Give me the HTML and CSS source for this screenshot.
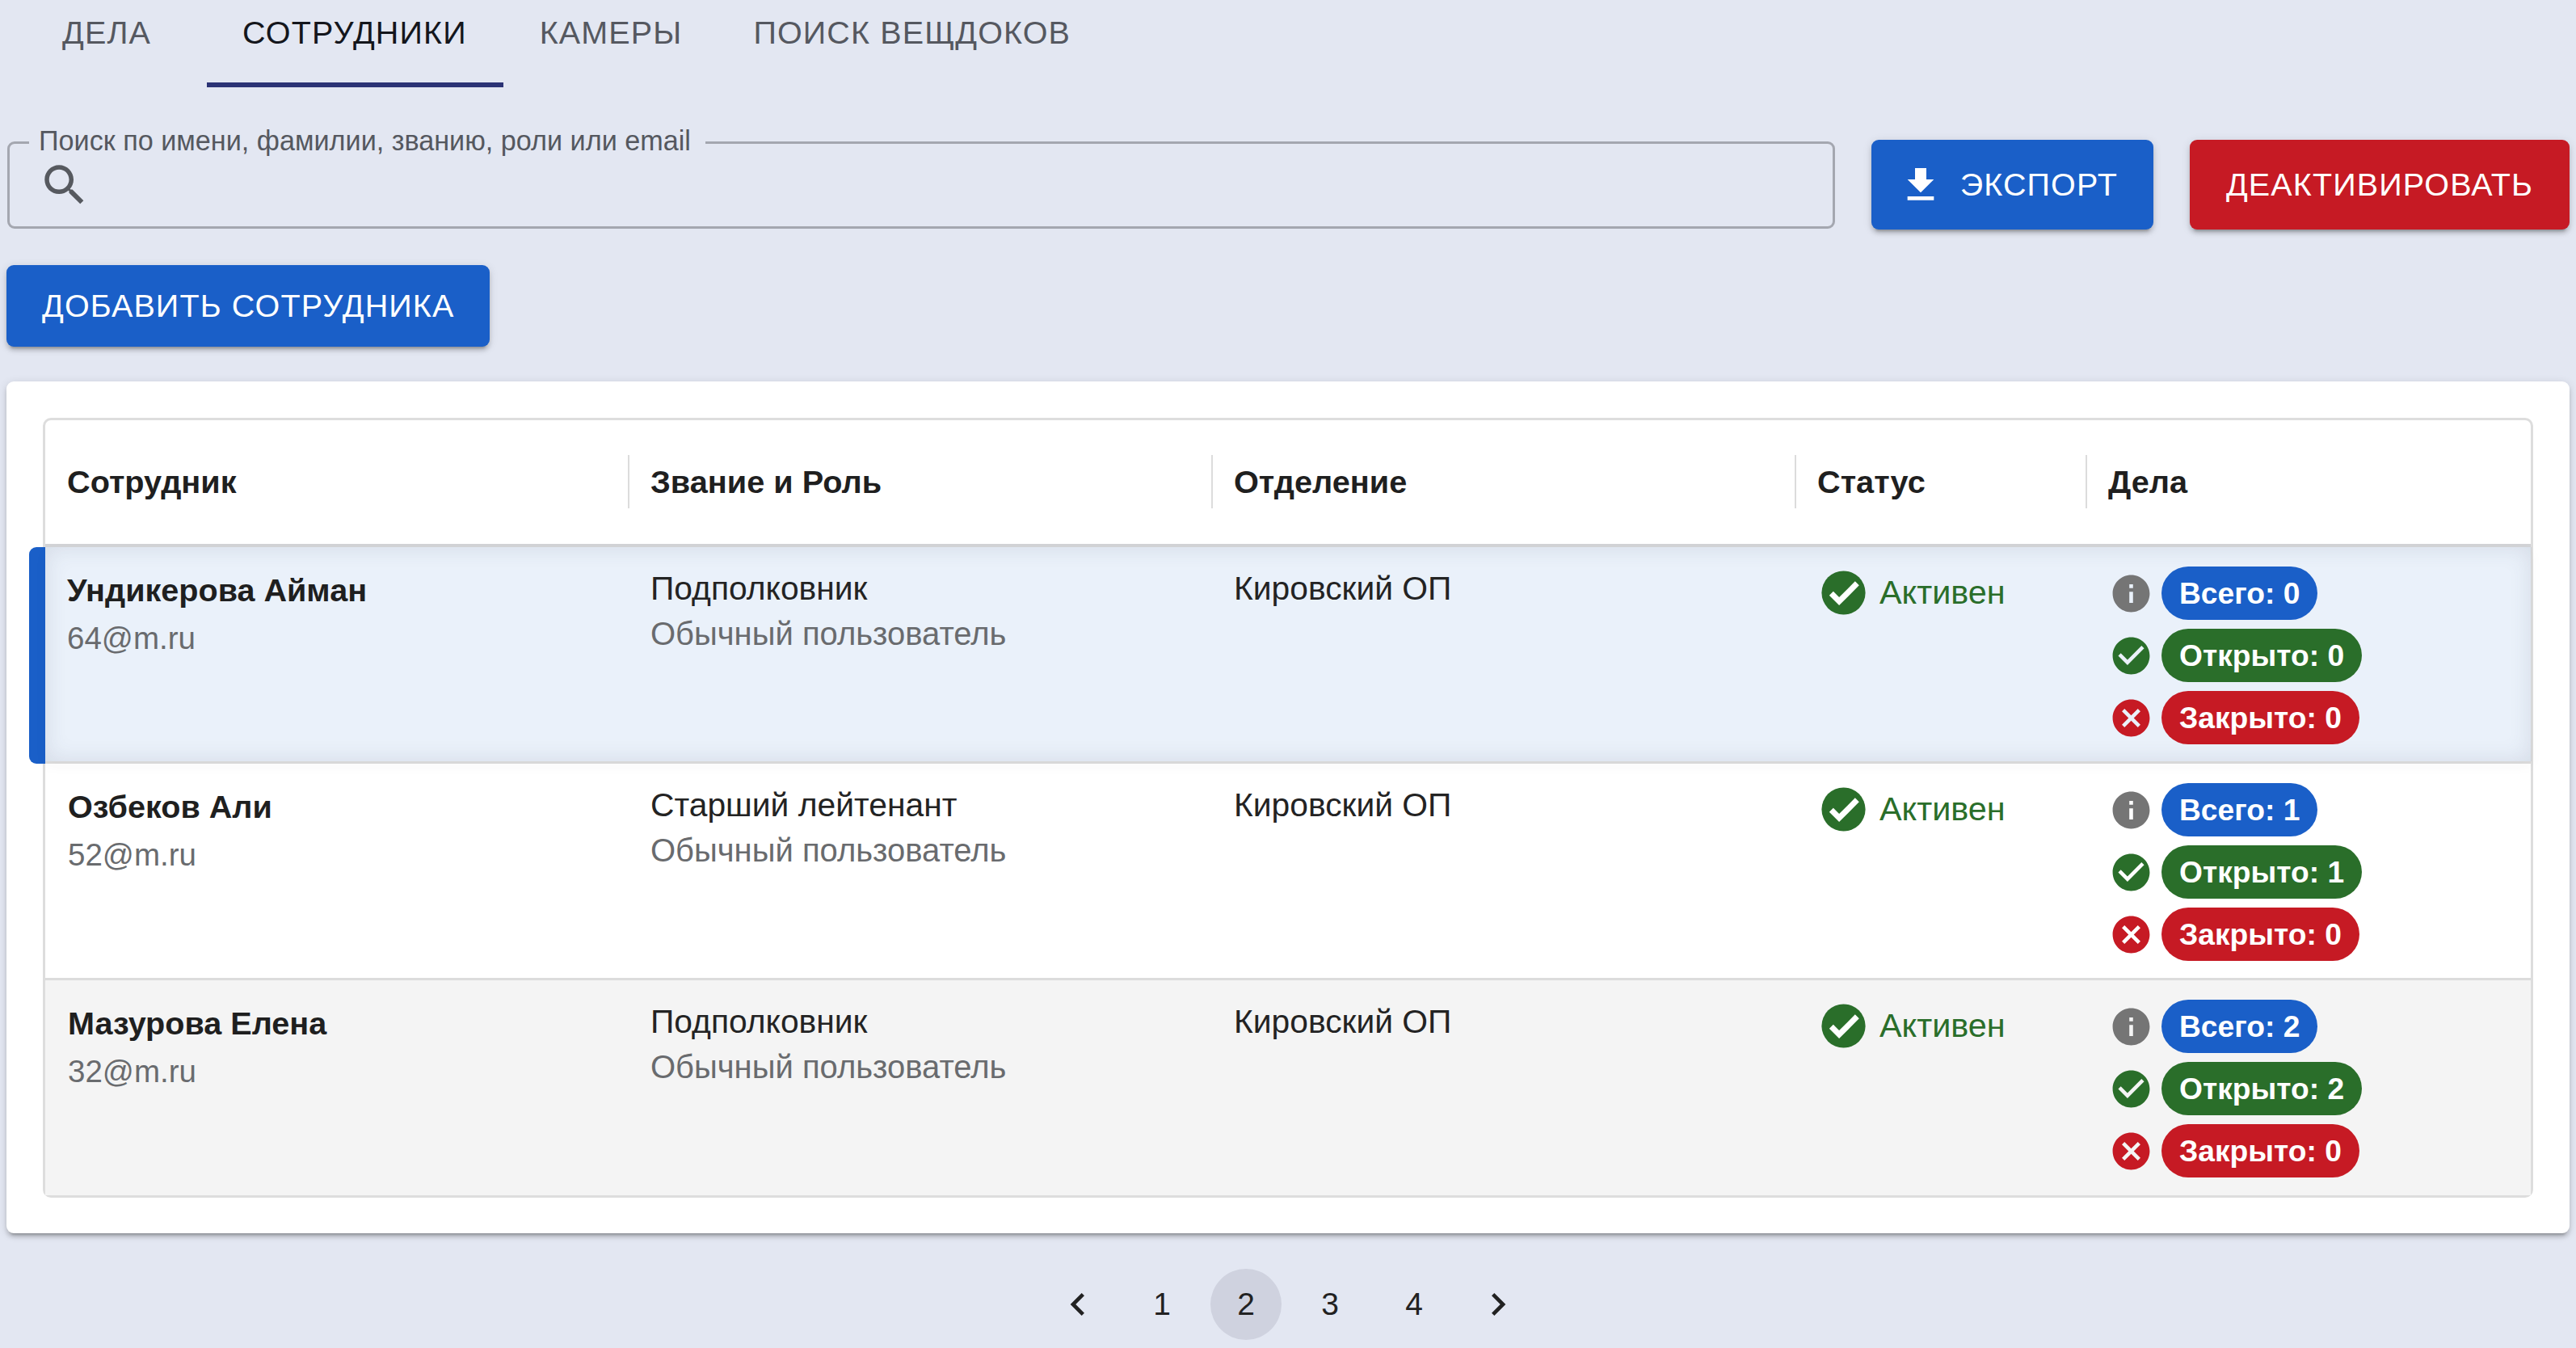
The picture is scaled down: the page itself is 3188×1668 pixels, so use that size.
FILE: index.html
```html
<!DOCTYPE html>
<html lang="ru">
<head>
<meta charset="utf-8">
<title>Сотрудники</title>
<link rel="stylesheet" href="styles.css">
</head>
<body>
<svg class="defs" width="0" height="0" aria-hidden="true">
  <symbol id="i-search" viewBox="0 0 24 24"><path d="M15.5 14h-.79l-.28-.27C15.41 12.59 16 11.11 16 9.5 16 5.91 13.09 3 9.5 3S3 5.91 3 9.5 5.91 16 9.5 16c1.61 0 3.09-.59 4.23-1.57l.27.28v.79l5 4.99L20.49 19l-4.99-5zm-6 0C7.01 14 5 11.99 5 9.5S7.01 5 9.5 5 14 7.01 14 9.5 11.99 14 9.5 14z"/></symbol>
  <symbol id="i-download" viewBox="0 0 24 24"><path d="M19 9h-4V3H9v6H5l7 7 7-7zM5 18v2h14v-2H5z"/></symbol>
  <symbol id="i-check" viewBox="0 0 24 24"><path d="M12 2C6.48 2 2 6.48 2 12s4.48 10 10 10 10-4.48 10-10S17.52 2 12 2zm-2 15l-5-5 1.41-1.41L10 14.17l7.59-7.59L19 8l-9 9z"/></symbol>
  <symbol id="i-status" viewBox="0 0 24 24"><circle cx="12" cy="12" r="10"/><path class="status-tick" d="M6.4 12.3 10 15.9l8.2-8.2"/></symbol>
  <symbol id="i-info" viewBox="0 0 24 24"><path d="M12 2C6.48 2 2 6.48 2 12s4.48 10 10 10 10-4.48 10-10S17.52 2 12 2zm1 15h-2v-6h2v6zm0-8h-2V7h2v2z"/></symbol>
  <symbol id="i-cancel" viewBox="0 0 24 24"><path d="M12 2C6.47 2 2 6.47 2 12s4.47 10 10 10 10-4.47 10-10S17.53 2 12 2zm5 13.59L15.59 17 12 13.41 8.41 17 7 15.59 10.59 12 7 8.41 8.41 7 12 10.59 15.59 7 17 8.41 13.41 12 17 15.59z"/></symbol>
  <symbol id="i-prev" viewBox="0 0 24 24"><path d="M15.41 7.41 14 6l-6 6 6 6 1.41-1.41L10.83 12z"/></symbol>
  <symbol id="i-next" viewBox="0 0 24 24"><path d="M10 6 8.59 7.41 13.17 12l-4.58 4.59L10 18l6-6z"/></symbol>
</svg>

<nav class="tabs">
  <a class="tab tab-wide">Дела</a>
  <a class="tab tab-active">Сотрудники</a>
  <a class="tab tab-third">Камеры</a>
  <a class="tab">Поиск вещдоков</a>
</nav>

<div class="toolbar">
  <div class="search">
    <span class="search-label">Поиск по имени, фамилии, званию, роли или email</span>
    <svg class="search-icon"><use href="#i-search"/></svg>
  </div>
  <button class="btn btn-blue btn-export"><svg class="btn-icon"><use href="#i-download"/></svg>Экспорт</button>
  <button class="btn btn-red">Деактивировать</button>
</div>

<button class="btn btn-blue btn-add">Добавить сотрудника</button>

<section class="card">
  <div class="table-wrap">
    <table class="table">
      <colgroup>
        <col class="col-1"><col class="col-a"><col class="col-a"><col class="col-b"><col>
      </colgroup>
      <thead>
        <tr>
          <th><span class="th-inner">Сотрудник</span></th>
          <th><span class="th-inner">Звание и Роль</span></th>
          <th><span class="th-inner">Отделение</span></th>
          <th><span class="th-inner">Статус</span></th>
          <th><span class="th-inner">Дела</span></th>
        </tr>
      </thead>
      <tbody>
        <tr class="row-selected">
          <td class="cell-accent"><div class="name">Ундикерова Айман</div><div class="muted email">64@m.ru</div></td>
          <td><div class="rank">Подполковник</div><div class="muted">Обычный пользователь</div></td>
          <td><div class="rank">Кировский ОП</div></td>
          <td class="cell-status"><div class="status"><svg class="status-icon"><use href="#i-status"/></svg>Активен</div></td>
          <td class="cell-cases">
            <div class="case"><svg class="case-icon grey"><use href="#i-info"/></svg><span class="chip chip-blue">Всего: 0</span></div>
            <div class="case"><svg class="case-icon green"><use href="#i-check"/></svg><span class="chip chip-green">Открыто: 0</span></div>
            <div class="case"><svg class="case-icon red"><use href="#i-cancel"/></svg><span class="chip chip-red">Закрыто: 0</span></div>
          </td>
        </tr>
        <tr>
          <td><div class="name">Озбеков Али</div><div class="muted email">52@m.ru</div></td>
          <td><div class="rank">Старший лейтенант</div><div class="muted">Обычный пользователь</div></td>
          <td><div class="rank">Кировский ОП</div></td>
          <td class="cell-status"><div class="status"><svg class="status-icon"><use href="#i-status"/></svg>Активен</div></td>
          <td class="cell-cases">
            <div class="case"><svg class="case-icon grey"><use href="#i-info"/></svg><span class="chip chip-blue">Всего: 1</span></div>
            <div class="case"><svg class="case-icon green"><use href="#i-check"/></svg><span class="chip chip-green">Открыто: 1</span></div>
            <div class="case"><svg class="case-icon red"><use href="#i-cancel"/></svg><span class="chip chip-red">Закрыто: 0</span></div>
          </td>
        </tr>
        <tr class="row-striped">
          <td><div class="name">Мазурова Елена</div><div class="muted email">32@m.ru</div></td>
          <td><div class="rank">Подполковник</div><div class="muted">Обычный пользователь</div></td>
          <td><div class="rank">Кировский ОП</div></td>
          <td class="cell-status"><div class="status"><svg class="status-icon"><use href="#i-status"/></svg>Активен</div></td>
          <td class="cell-cases">
            <div class="case"><svg class="case-icon grey"><use href="#i-info"/></svg><span class="chip chip-blue">Всего: 2</span></div>
            <div class="case"><svg class="case-icon green"><use href="#i-check"/></svg><span class="chip chip-green">Открыто: 2</span></div>
            <div class="case"><svg class="case-icon red"><use href="#i-cancel"/></svg><span class="chip chip-red">Закрыто: 0</span></div>
          </td>
        </tr>
      </tbody>
    </table>
  </div>
</section>

<nav class="pager">
  <span class="page"><svg class="page-icon"><use href="#i-prev"/></svg></span>
  <span class="page">1</span>
  <span class="page page-active">2</span>
  <span class="page">3</span>
  <span class="page">4</span>
  <span class="page"><svg class="page-icon"><use href="#i-next"/></svg></span>
</nav>
</body>
</html>
```
FILE: styles.css
```css
* { box-sizing: border-box; }
html, body { margin: 0; height: 100%; }
body {
  padding: 0 8px;
  background: #e3e7f2;
  color: #1f1f1f;
  font-family: "Liberation Sans", Arial, sans-serif;
  font-size: 40px;
  overflow: hidden;
}
.defs { position: absolute; }

.tabs { display: flex; height: 108px; }
.tab {
  display: block;
  height: 108px;
  padding: 20px 44px 0;
  font-size: 39.5px;
  line-height: 40px;
  letter-spacing: 1.13px;
  text-transform: uppercase;
  color: #555860;
}
.tab-wide { width: 248px; text-align: center; }
.tab-active { padding-right: 45px; color: #14161c; border-bottom: 6px solid #2b3375; }
.tab-third { padding-left: 45px; }

.toolbar { display: flex; align-items: center; gap: 45px; margin-top: 65px; height: 111px; }
.search {
  position: relative;
  flex: 1;
  height: 108px;
  margin-left: 1px;
  display: flex;
  align-items: center;
  padding-left: 35px;
  border: 3px solid #a4a7b0;
  border-radius: 9px;
}
.search-label {
  position: absolute;
  top: -23px;
  left: 24px;
  padding: 0 18px 0 12px;
  background: #e3e7f2;
  font-size: 34.2px;
  line-height: 38px;
  color: #55585f;
}
.search-icon { width: 66px; height: 66px; fill: #56595f; }

.btn {
  display: flex;
  align-items: center;
  justify-content: center;
  height: 111px;
  padding: 0 45px;
  border: 0;
  border-radius: 9px;
  font-family: inherit;
  font-size: 39.5px;
  letter-spacing: 1.13px;
  text-transform: uppercase;
  color: #fff;
  box-shadow: 0 7px 3px -5px rgba(0,0,0,.2), 0 5px 5px 0 rgba(0,0,0,.14), 0 2px 12px 0 rgba(0,0,0,.12);
}
.btn-blue { background: #1a5fc8; }
.btn-red { background: #c61a24; }
.btn-export { padding-left: 33px; padding-right: 44px; }
.btn-icon { width: 56px; height: 56px; margin-right: 21px; fill: #fff; }
.btn-add { height: 101px; margin: 44px 0 0; padding: 0 44px; }

.card {
  margin-top: 43px;
  height: 1054px;
  padding: 45px;
  background: #fff;
  border-radius: 9px;
  box-shadow: 0 7px 3px -5px rgba(0,0,0,.2), 0 5px 5px 0 rgba(0,0,0,.14), 0 2px 12px 0 rgba(0,0,0,.12);
}
.table-wrap { border: 3px solid #dddddd; border-radius: 10px; }
.table {
  width: 100%;
  table-layout: fixed;
  border-collapse: separate;
  border-spacing: 0;
}
.col-1 { width: 721px; }
.col-a { width: 722px; }
.col-b { width: 360px; }
.table th {
  height: 157px;
  padding: 0 0 1px;
  text-align: left;
  font-size: 39.7px;
  font-weight: 700;
  border-bottom: 4px solid #d2d3d6;
}
.th-inner {
  display: flex;
  align-items: center;
  height: 66px;
  padding-left: 26px;
  border-left: 2px solid #dcdcdc;
}
.table th:first-child .th-inner { border-left: 0; padding-left: 27px; }
.table td {
  height: 268px;
  padding: 31px 20px 0 28px;
  vertical-align: top;
  border-bottom: 3px solid #dcdcdc;
}
.table tbody tr:last-child td { border-bottom: 0; height: 266px; }
.row-selected td { background: #eaf1fa; }
.row-striped td { background: #f4f4f4; }
.table td.cell-accent { position: relative; padding-left: 27px; }
.cell-accent::before {
  content: "";
  position: absolute;
  left: -20px;
  top: 0;
  bottom: -3px;
  width: 20px;
  background: #1a5fc8;
  border-radius: 9px 0 0 9px;
}
.cell-accent::after {
  content: "";
  position: absolute;
  left: 0;
  top: 0;
  bottom: 0;
  width: 3077px;
  pointer-events: none;
  box-shadow: inset 0 0 28px rgba(60,70,90,.13), 0 6px 16px rgba(60,60,60,.03);
}
.name { font-size: 39.6px; font-weight: 700; line-height: 44px; color: #1f1f1f; }
.rank { margin-top: -2px; font-size: 40.8px; line-height: 44px; color: #232323; }
.muted { margin-top: 12px; line-height: 44px; color: #696b6e; }
.email { margin-top: 16px; font-size: 38.5px; }
.table td.cell-status { padding: 24px 0 0 28px; }
.status { display: flex; align-items: center; gap: 12px; height: 65px; font-size: 41.4px; color: #2a6e2a; }
.status-icon { width: 65px; height: 65px; fill: #2a6e2a; }
.status-tick { fill: none; stroke: #fff; stroke-width: 2.6; }

.table td.cell-cases { padding: 24px 0 0 29px; }
.case { display: flex; align-items: center; gap: 10px; height: 66px; margin-bottom: 11px; }
.case-icon { width: 55px; height: 55px; }
.grey { fill: #757575; }
.green { fill: #2a6e2a; }
.red { fill: #c61a24; }
.chip {
  display: flex;
  align-items: center;
  height: 66px;
  padding: 0 22px;
  border-radius: 33px;
  font-size: 37.2px;
  font-weight: 700;
  color: #fff;
}
.chip-blue { background: #1a5fc8; }
.chip-green { background: #2a6e2a; }
.chip-red { background: #c61a24; }

.pager { display: flex; justify-content: center; gap: 16px; margin-top: 44px; }
.page {
  display: flex;
  align-items: center;
  justify-content: center;
  width: 88px;
  height: 88px;
  border-radius: 50%;
  font-size: 39px;
  color: #222;
}
.page-active { background: #cfd2df; }
.page-icon { width: 56px; height: 56px; fill: #222; }
```
